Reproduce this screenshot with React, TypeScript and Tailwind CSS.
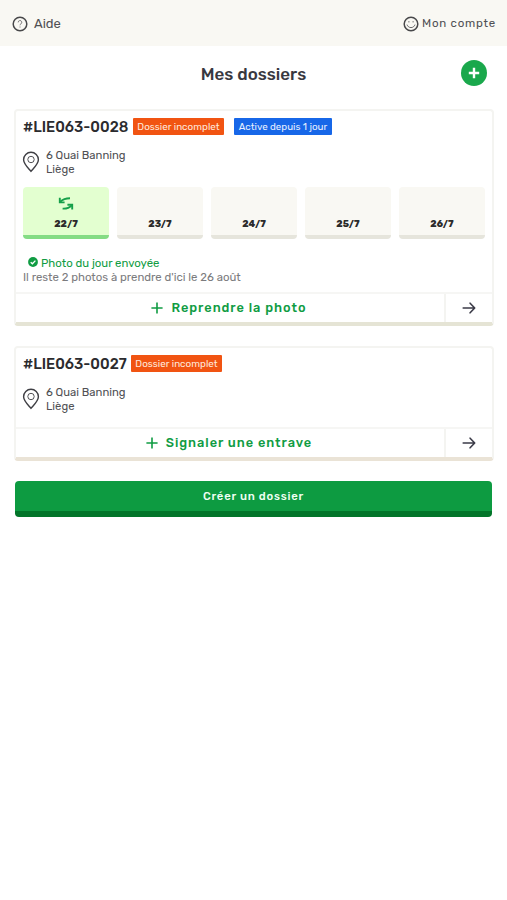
import React from 'react';

type Day = {
	date: string;
	done?: boolean;
}

type Folder = {
	id: string;
	idClass: string;
	activeLabel?: string;
	days?: Day[];
	action: string;
	shadow: string;
}

const folders: Folder[] = [
	{
		id: '#LIE063-0028',
		idClass: 'w-[110px]',
		activeLabel: 'Active depuis 1 jour',
		days: [
			{date: '22/7', done: true},
			{date: '23/7'},
			{date: '24/7'},
			{date: '25/7'},
			{date: '26/7'},
		],
		action: 'Reprendre la photo',
		shadow: 'border-b-[#e5e4d5]',
	},
	{
		id: '#LIE063-0027',
		idClass: 'w-[108px]',
		action: 'Signaler une entrave',
		shadow: 'border-b-[#eae3d6]',
	},
];

const HelpIcon = () => (
	<svg width="16" height="16" viewBox="0 0 16 16" fill="none" stroke="#48484a">
		<circle cx="8" cy="8" r="6.8" strokeWidth="1.5"/>
		<path d="M6.2 6.4a1.8 1.8 0 1 1 2.7 1.5c-.6.4-.9.7-.9 1.4M8 10.5v1" strokeWidth=".7"/>
	</svg>
)

const SmileIcon = () => (
	<svg width="16" height="16" viewBox="0 0 16 16" fill="none" stroke="#48484a">
		<circle cx="8" cy="8" r="6.8" strokeWidth="1.5"/>
		<path d="M4 8.6c.6 1.8 2.1 3 4 3s3.4-1.2 4-3" strokeWidth=".8"/>
		<path d="M5.9 5.2v1.2M10.1 5.2v1.2" strokeWidth=".9"/>
	</svg>
)

const PinIcon = () => (
	<svg width="18" height="22" viewBox="0 0 18 22" fill="none" stroke="#3f3f44">
		<path d="M9 20.4C5.6 16.4 1.6 12.6 1.6 8.7a7.4 7.4 0 0 1 14.8 0c0 3.9-4 7.7-7.4 11.7z" strokeWidth="1.4" strokeLinejoin="round"/>
		<circle cx="9" cy="8.5" r="3.2" strokeWidth=".9"/>
	</svg>
)

const RetakeIcon = () => (
	<svg width="16" height="15" viewBox="0 0 16 15" fill="none" stroke="#16a04a" strokeWidth="1.9">
		<path d="M1.8 1.8v4.6h4.8"/>
		<path d="M2.2 5.900C4.600 3.500 7.400 2.300 12 2.300"/>
		<path d="M14.200 13.400V8.800H9.400"/>
		<path d="M13.800 9.300c-2.300 2.500-5 3.500-9.200 3.300"/>
	</svg>
)

const CheckIcon = () => (
	<svg width="10" height="10" viewBox="0 0 10 10" fill="none">
		<circle cx="5" cy="5" r="4.9" fill="#109c43"/>
		<path d="M2.7 5.2l1.7 1.6 3-3.2" stroke="#fff" strokeWidth="1.3"/>
	</svg>
)

const PlusIcon = () => (
	<svg width="12" height="12" viewBox="0 0 12 12" stroke="#109c43" strokeWidth="1.6">
		<path d="M6 .4v11.2M.4 6h11.2"/>
	</svg>
)

const ArrowIcon = () => (
	<svg width="14" height="12" viewBox="0 0 14 12" fill="none" stroke="#3b3b48" strokeWidth="1.6" strokeLinecap="round" strokeLinejoin="round">
		<path d="M1.200 6h11.300M8.100 1.200L12.700 6l-4.600 4.800"/>
	</svg>
)

const DayTile = ({date, done}: Day) => (
	<div className={`flex h-[52px] flex-col items-center justify-end rounded-[4px] border-b-4 pb-[5px] ${done ? 'border-[#84dc84] bg-[#e3ffd0]' : 'border-[#e6e5dc] bg-[#f9f8f3]'}`}>
		{done && <RetakeIcon/>}
		<span className="mt-[6px] text-[9.4px] font-extrabold leading-[13px] text-[#2b2b2b]">{date}</span>
	</div>
)

const FolderCard = ({folder}: {folder: Folder}) => (
	<section className={`rounded-[4px] border-2 border-b-4 border-[#f4f4f1] ${folder.shadow}`}>
		<div className="px-[7px] pt-[7px]">
			<div className="flex items-center">
				<h2 className={`shrink-0 whitespace-nowrap pt-[1px] text-[14.7px] font-medium leading-[16px] text-[#2b2b2e] ${folder.idClass}`}>{folder.id}</h2>
				<span className="h-[17px] w-[91px] whitespace-nowrap rounded-[1px] bg-[#f15412] text-center text-[9.9px] leading-[17px] text-[#ffe8dc]">Dossier incomplet</span>
				{folder.activeLabel && (
					<span className="ml-[10px] h-[17px] w-[98px] whitespace-nowrap rounded-[1px] bg-[#1767e8] text-center text-[9.8px] leading-[17px] text-[#e6efff]">{folder.activeLabel}</span>
				)}
			</div>
			<div className="mt-[13px] flex h-[28px] items-center gap-[6px]">
				<div className="-ml-[1px]"><PinIcon/></div>
				<p className="text-[11.3px] leading-[14px] text-[#505054]">6 Quai Banning<br/>Liège</p>
			</div>
			{folder.days && (
				<>
					<div className="mt-[11px] grid grid-cols-5 gap-[8px]">
						{folder.days.map(day => <DayTile key={day.date} {...day}/>)}
					</div>
					<div className="mt-[17px] flex h-[14px] items-center gap-[3px] pl-[5px]">
						<div className="mb-[3px]"><CheckIcon/></div>
						<span className="text-[11.4px] leading-[14px] text-[#109c43]">Photo du jour envoyée</span>
					</div>
					<p className="text-[11.4px] leading-[14px] text-[#7b7b7e]">Il reste 2 photos à prendre d'ici le 26 août</p>
				</>
			)}
		</div>
		<div className={`flex h-[30px] border-t-2 border-[#f6f6f4] ${folder.days ? 'mt-[8px]' : 'mt-[14px]'}`}>
			<button className="flex flex-1 items-center justify-center gap-[8px] pr-[2px] text-[12.8px] font-medium tracking-[0.95px] text-[#109c43]">
				<PlusIcon/>
				<span>{folder.action}</span>
			</button>
			<button className="flex w-[48px] items-center justify-center border-l-2 border-[#f4f4f1]">
				<ArrowIcon/>
			</button>
		</div>
	</section>
)

const App = () => {
	return (
		<div className="min-h-[900px] bg-white font-['Rubik','Roboto',sans-serif]">
			<header className="flex h-[46px] items-center justify-between bg-[#f9f8f3] pl-[12px] pr-[11px] pt-[1px] text-[#505053]">
				<div className="flex items-center gap-[6px]">
					<HelpIcon/>
					<span className="text-[13px]">Aide</span>
				</div>
				<div className="flex items-center gap-[3px]">
					<SmileIcon/>
					<span className="text-[11.5px] tracking-[0.75px]">Mon compte</span>
				</div>
			</header>

			<div className="relative flex h-[63px] items-start justify-center pt-[17px]">
				<h1 className="text-[17px] font-medium leading-[22px] text-[#38383f]">Mes dossiers</h1>
				<button className="absolute right-[20px] top-[14px] flex h-[26px] w-[26px] items-center justify-center rounded-full bg-[#1aa84c]">
					<svg width="12" height="12" viewBox="0 0 12 12" stroke="#fff" strokeWidth="2.4">
						<path d="M6 .8v10.4M.8 6h10.4"/>
					</svg>
				</button>
			</div>

			<main className="flex flex-col gap-[20px] px-[13px] pl-[14px]">
				{folders.map(folder => <FolderCard key={folder.id} folder={folder}/>)}
				<button className="ml-[1px] mr-[2px] h-[36px] rounded-[4px] border-b-[6px] border-[#03752a] bg-[#0d9b41] text-[11.3px] font-medium leading-[15px] tracking-[0.75px] text-[#effff3]">Créer un dossier</button>
			</main>
		</div>
	);
};

export default App;
